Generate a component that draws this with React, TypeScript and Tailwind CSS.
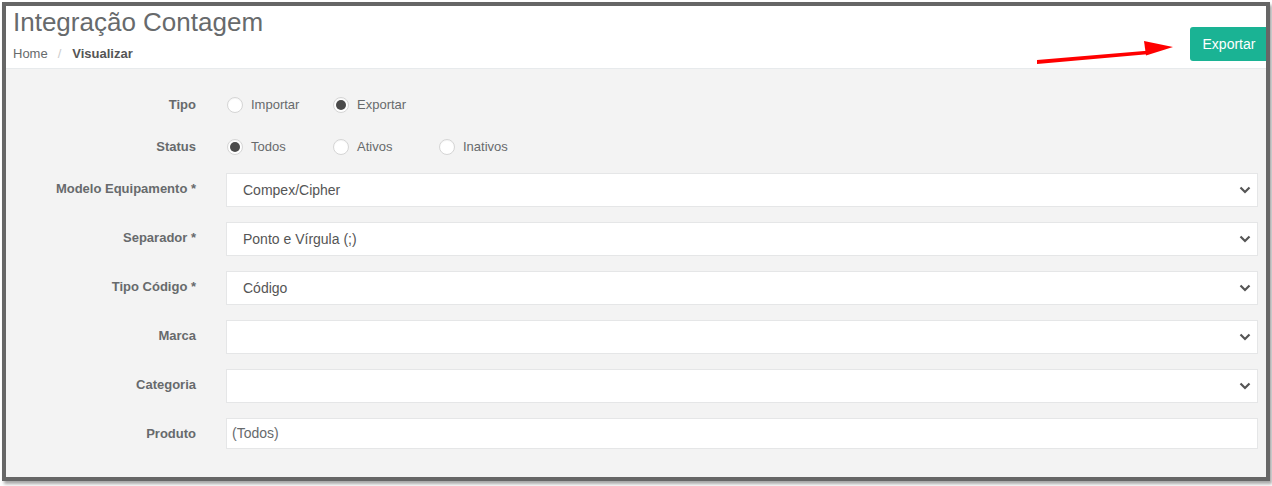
import React from "react";

const font = { fontFamily: '"Liberation Sans", Arial, sans-serif' };

function Radio({ checked, label }: { checked?: boolean; label: string }) {
  return (
    <div className="flex items-center w-[106px]">
      <span className="ml-[1px] w-[16px] h-[16px] rounded-full bg-white border border-[#d5d5d5] flex items-center justify-center shadow-[inset_0_1px_1px_rgba(0,0,0,0.04)]">
        {checked && <span className="w-[10px] h-[10px] rounded-full bg-[#4a4a4a]" />}
      </span>
      <span className="ml-[8px] text-[13px] text-[#676a6c] leading-[18px]">{label}</span>
    </div>
  );
}

function Chevron() {
  return (
    <svg width="12" height="8" viewBox="0 0 12 8" className="absolute right-[6px] top-1/2 -translate-y-1/2">
      <polyline points="1.5,1.5 6,6 10.5,1.5" fill="none" stroke="#555" strokeWidth="2.2" />
    </svg>
  );
}

function Row({
  label,
  children,
  className = "",
  lift = false,
}: {
  label: string;
  children: React.ReactNode;
  className?: string;
  lift?: boolean;
}) {
  return (
    <div className={"flex items-center " + className}>
      <div
        className={
          "w-[190px] text-right text-[13px] font-bold text-[#676a6c] leading-[18px] " + (lift ? "pb-[2px]" : "")
        }
      >
        {label}
      </div>
      <div className="ml-[30px] flex-1 mr-[8px]">{children}</div>
    </div>
  );
}

function Select({ value }: { value?: string }) {
  return (
    <div className="relative h-[34px] bg-white border border-[#e5e6e7] flex items-center pl-[16px] text-[14px] text-[#555]">
      {value}
      <Chevron />
    </div>
  );
}

export default function App() {
  return (
    <div className="w-[1272px] h-[486px] bg-white p-[2px]" style={font}>
      <div className="relative w-[1268px] h-[479px] border-4 border-[#666] shadow-[2px_3px_3px_rgba(0,0,0,0.35)] flex flex-col overflow-hidden">
        <div className="h-[63px] bg-white border-b border-[#e7eaec] flex justify-between shrink-0">
          <div className="pl-[7px] pt-[2px]">
            <div className="text-[26px] leading-[28px] text-[#676a6c]">Integração Contagem</div>
            <div className="mt-[9px] text-[13px] leading-[18px] flex items-center">
              <span className="text-[#676a6c]">Home</span>
              <span className="text-[#ccc] ml-[10px] mr-[11px]">/</span>
              <span className="font-bold text-[#555]">Visualizar</span>
            </div>
          </div>
          <div className="pt-[21px] mr-[-2px]">
            <div className="h-[34px] w-[78px] rounded-[3px] bg-[#1ab394] text-white text-[14px] flex items-center justify-center">
              Exportar
            </div>
          </div>
        </div>
        <div className="flex-1 bg-[#f3f3f3] pt-[19px]">
          <Row label="Tipo" className="h-[34px]">
            <div className="flex">
              <Radio label="Importar" />
              <Radio label="Exportar" checked />
            </div>
          </Row>
          <Row label="Status" className="h-[34px] mt-[8px]">
            <div className="flex">
              <Radio label="Todos" checked />
              <Radio label="Ativos" />
              <Radio label="Inativos" />
            </div>
          </Row>
          <Row label="Modelo Equipamento *" className="mt-[9px]" lift>
            <Select value="Compex/Cipher" />
          </Row>
          <Row label="Separador *" className="mt-[15px]" lift>
            <Select value="Ponto e Vírgula (;)" />
          </Row>
          <Row label="Tipo Código *" className="mt-[15px]" lift>
            <Select value="Código" />
          </Row>
          <Row label="Marca" className="mt-[15px]" lift>
            <Select />
          </Row>
          <Row label="Categoria" className="mt-[15px]" lift>
            <Select />
          </Row>
          <Row label="Produto" className="mt-[15px]">
            <div className="h-[31px] bg-white border border-[#e5e6e7] flex items-center pl-[5px] text-[14px] text-[#676a6c]">
              (Todos)
            </div>
          </Row>
        </div>
        <svg
          className="absolute left-[1026px] top-[30px] pointer-events-none"
          width="145"
          height="30"
          viewBox="0 0 145 30"
        >
          <polygon points="5,24 118,14.5 118,18 5,28" fill="#f00" />
          <polygon points="112,5 141,11 114,19.5" fill="#f00" />
        </svg>
      </div>
    </div>
  );
}
